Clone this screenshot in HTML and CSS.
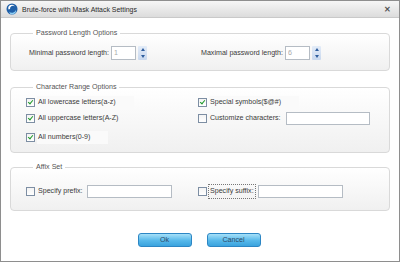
FILE: index.html
```html
<!DOCTYPE html>
<html lang="en">
<head>
    <meta charset="UTF-8">
    <title>Brute-force with Mask Attack Settings</title>
    <link rel="stylesheet" href="styles.css">
</head>
<body>
    <div class="dialog">
        <div class="titlebar">
            <svg class="app-icon" width="12" height="12" viewBox="0 0 12 12">
                <circle cx="6" cy="6" r="5.5" fill="#1f5fa8"/>
                <path d="M2.5 6.5 A3.6 3.6 0 0 1 9 3.5 A3 3 0 0 0 4 6 Z" fill="#ffffff"/>
                <path d="M3 8.5 A4 4 0 0 0 9.8 7 A3.2 3.2 0 0 1 3 8.5 Z" fill="#8fd0f5"/>
            </svg>
            <span class="title">Brute-force with Mask Attack Settings</span>
            <span class="close">&#x2715;</span>
        </div>

        <div class="content">
            <fieldset class="group g-length">
                <legend>Password Length Options</legend>
                <div class="cols">
                    <div class="field">
                        <span class="lbl">Minimal password length:</span>
                        <input type="text" class="num" value="1" disabled>
                        <span class="spin"><i class="up"></i><i class="down"></i></span>
                    </div>
                    <div class="field">
                        <span class="lbl">Maximal password length:</span>
                        <input type="text" class="num" value="6" disabled>
                        <span class="spin"><i class="up"></i><i class="down"></i></span>
                    </div>
                </div>
            </fieldset>

            <fieldset class="group g-range">
                <legend>Character Range Options</legend>
                <div class="cols rows">
                    <label class="check"><span class="box on"></span><span class="txt wide">All lowercase letters(a-z)</span></label>
                    <label class="check"><span class="box on"></span><span class="txt wide">Special symbols($@#)</span></label>
                    <label class="check"><span class="box on"></span><span class="txt">All uppercase letters(A-Z)</span></label>
                    <div class="field">
                        <label class="check"><span class="box"></span><span class="txt">Customize characters:</span></label>
                        <input type="text" class="text w84">
                    </div>
                    <label class="check last"><span class="box on"></span><span class="txt wide">All numbers(0-9)</span></label>
                </div>
            </fieldset>

            <fieldset class="group g-affix">
                <legend>Affix Set</legend>
                <div class="cols">
                    <div class="field">
                        <label class="check"><span class="box"></span><span class="txt">Specify prefix:</span></label>
                        <input type="text" class="text w85">
                    </div>
                    <div class="field">
                        <label class="check"><span class="box"></span><span class="txt focus">Specify suffix:</span></label>
                        <input type="text" class="text w85">
                    </div>
                </div>
            </fieldset>

            <div class="buttons">
                <button class="btn">Ok</button>
                <button class="btn">Cancel</button>
            </div>
        </div>
    </div>
</body>
</html>
```

FILE: styles.css
```css
body {
    margin: 0;
    font-family: "Liberation Sans", Arial, sans-serif;
    font-size: 7.1px;
    line-height: 9px;
    color: #3a3a3a;
    background: #fff;
}
.dialog {
    width: 400px;
    height: 262px;
    box-sizing: border-box;
    border: 1px solid #8e8e8e;
    background: #fff;
}
.titlebar {
    height: 16px;
    display: flex;
    align-items: center;
    padding: 0 8px 0 5px;
    background: linear-gradient(#f6f6f6, #dcdcdc);
    border-bottom: 1px solid #c9c9c9;
    font-size: 6.95px;
    color: #2a2a2a;
}
.app-icon {
    margin-right: 4px;
}
.title {
    flex: 1;
}
.close {
    font-size: 7.5px;
    font-weight: bold;
    color: #555;
}
.content {
    padding: 11px 9px 0 9px;
}
.group {
    margin: 0;
    padding: 0 15px;
    border: 1px solid #d9d9d9;
    border-radius: 4px;
    background: linear-gradient(#ffffff, #f0f0f0);
}
.group legend {
    margin-left: 7px;
    padding: 0 3px;
    height: 9px;
    color: #555;
}
.cols {
    display: grid;
    grid-template-columns: 172px 1fr;
    align-items: center;
}
.g-length .cols {
    padding: 8px 0 10px 3px;
}
.g-range {
    margin-top: 12px;
}
.g-range .cols {
    padding: 4px 0 8px 0;
    row-gap: 3px;
}
.g-affix {
    margin-top: 10px;
}
.g-affix .cols {
    padding: 13px 0 12px 0;
}
.field {
    display: flex;
    align-items: center;
    height: 14px;
}
.rows .field,
.g-affix .field {
    height: 13px;
}
.lbl {
    margin-right: 2px;
}
input {
    font: inherit;
    box-sizing: border-box;
    border: 1px solid #b5bcc4;
    background: #fff;
    margin: 0;
    padding: 0 2px;
    outline: none;
}
.num {
    width: 25px;
    height: 14px;
    color: #aaa;
}
.text {
    height: 13px;
}
.w84 {
    width: 84px;
    margin-left: 4px;
}
.w85 {
    width: 85px;
    margin-left: 3px;
}
.spin {
    display: flex;
    flex-direction: column;
    justify-content: space-around;
    align-items: center;
    width: 9px;
    height: 14px;
    margin-left: 2px;
    background: linear-gradient(#e3ecf8, #c9d8ee);
    border-radius: 1px;
}
.spin i {
    width: 0;
    height: 0;
    border-left: 2.5px solid transparent;
    border-right: 2.5px solid transparent;
}
.spin .up {
    border-bottom: 3px solid #2f5e9e;
}
.spin .down {
    border-top: 3px solid #2f5e9e;
}
.check {
    display: flex;
    align-items: center;
    height: 13px;
}
.check.last {
    margin-top: 3px;
}
.box {
    width: 9px;
    height: 9px;
    box-sizing: border-box;
    border: 1px solid #7d8ea3;
    background: linear-gradient(#f3f3f3, #fff);
    margin-right: 2px;
    position: relative;
}
.box.on::after {
    content: "";
    position: absolute;
    left: 2px;
    top: 0;
    width: 2px;
    height: 4px;
    border: solid #1e9a2a;
    border-width: 0 1.5px 1.5px 0;
    transform: rotate(40deg);
}
.txt {
    padding: 2px 1px;
}
.txt.wide {
    background: #fafafa;
    padding-right: 18px;
}
.txt.focus {
    outline: 1px dotted #777;
}
.buttons {
    display: flex;
    justify-content: center;
    gap: 15px;
    margin-top: 22px;
    padding-right: 2px;
}
.btn {
    width: 54px;
    height: 14px;
    font: inherit;
    line-height: 12px;
    color: #2d4a66;
    border: 1px solid #2c86c4;
    border-radius: 3px;
    background: linear-gradient(#a6e0f8, #56b8ea 55%, #3aa3de);
    padding: 0;
}
```
